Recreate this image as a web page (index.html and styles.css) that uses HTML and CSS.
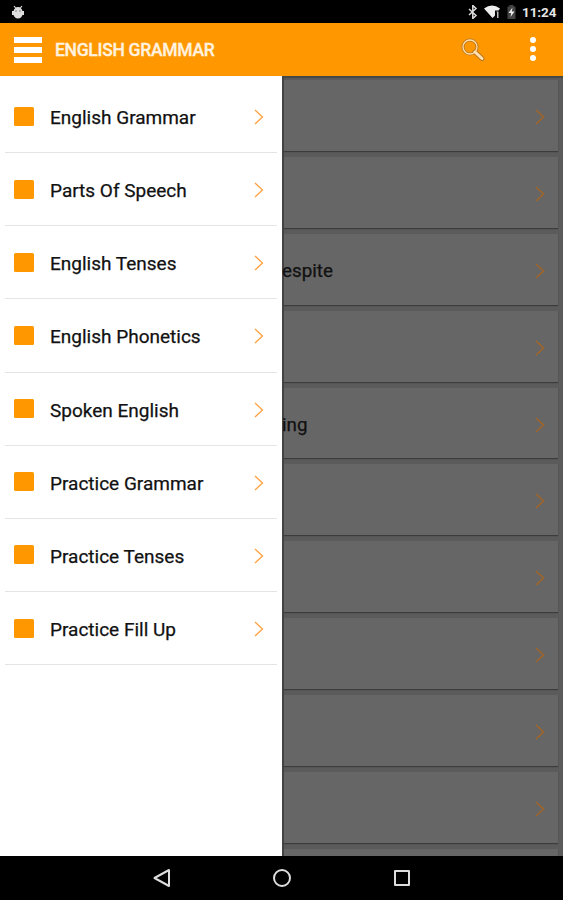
FILE: index.html
```
<!DOCTYPE html>
<html lang="en">
<head>
    <meta charset="UTF-8">
    <title>English Grammar</title>
    <link rel="stylesheet" href="styles.css">
</head>
<body>
<div class="status">
    <svg class="droid" width="14" height="14" viewBox="0 0 14 14">
        <path d="M3 1l1.600 2M11 1L9.400 3" stroke="#ddd" stroke-width="1.200"/>
        <path d="M2.500 7a4.500 5 0 0 1 9 0z M1 6h12v4H1z M2.500 9h9a4.500 4.500 0 0 1-9 0z" fill="#ddd"/>
        <circle cx="5" cy="6" r=".8" fill="#777"/><circle cx="9" cy="6" r=".8" fill="#777"/>
    </svg>
    <div class="tray">
        <svg width="10" height="14" viewBox="0 0 10 14"><path d="M1 4l7 6.500-3.200 3V.5L8 3.500 1 10" fill="none" stroke="#ddd" stroke-width="1.500"/></svg>
        <svg class="wifi" width="17" height="14" viewBox="0 0 17 14"><path d="M0 3.500Q8-2.500 16 3.500L14.500 5.500H11v5L8.500 13z" fill="#eee"/><path d="M12.500 6.500h2V13h-1.500V8z" fill="#bbb"/></svg>
        <svg class="battery" width="9" height="14" viewBox="0 0 9 14"><path d="M2.500 0h4v1.500H8.500V14H.5V1.500h2z" fill="#444"/><path d="M5.500 2.500L1.500 8h2.700L3.500 12 7.500 6.500H4.800z" fill="#eee"/></svg>
        <span class="time">11:24</span>
    </div>
</div>
<header class="bar">
    <div class="burger"><i></i><i></i><i></i></div>
    <h1>ENGLISH GRAMMAR</h1>
    <svg class="search" width="24" height="24" viewBox="0 0 24 24">
        <circle cx="9" cy="9" r="7" fill="none" stroke="#b87521" stroke-width="3"/>
        <path d="M14 14l7 6.500" stroke="#b87521" stroke-width="5" stroke-linecap="round"/>
        <circle cx="9" cy="9" r="7" fill="none" stroke="#ffdda6" stroke-width="1.300"/>
        <path d="M14 14l7 6.500" stroke="#ffe2b0" stroke-width="3" stroke-linecap="round"/>
    </svg>
    <div class="more"><i></i><i></i><i></i></div>
</header>
<main class="content">
    <nav class="drawer">
        <a class="item"><i></i><span>English Grammar</span><svg class="arrow" width="10" height="16" viewBox="0 0 10 16"><path d="M1 1l7.500 7L1 15"/></svg></a>
        <a class="item"><i></i><span>Parts Of Speech</span><svg class="arrow" width="10" height="16" viewBox="0 0 10 16"><path d="M1 1l7.500 7L1 15"/></svg></a>
        <a class="item"><i></i><span>English Tenses</span><svg class="arrow" width="10" height="16" viewBox="0 0 10 16"><path d="M1 1l7.500 7L1 15"/></svg></a>
        <a class="item"><i></i><span>English Phonetics</span><svg class="arrow" width="10" height="16" viewBox="0 0 10 16"><path d="M1 1l7.500 7L1 15"/></svg></a>
        <a class="item"><i></i><span>Spoken English</span><svg class="arrow" width="10" height="16" viewBox="0 0 10 16"><path d="M1 1l7.500 7L1 15"/></svg></a>
        <a class="item"><i></i><span>Practice Grammar</span><svg class="arrow" width="10" height="16" viewBox="0 0 10 16"><path d="M1 1l7.500 7L1 15"/></svg></a>
        <a class="item"><i></i><span>Practice Tenses</span><svg class="arrow" width="10" height="16" viewBox="0 0 10 16"><path d="M1 1l7.500 7L1 15"/></svg></a>
        <a class="item"><i></i><span>Practice Fill Up</span><svg class="arrow" width="10" height="16" viewBox="0 0 10 16"><path d="M1 1l7.500 7L1 15"/></svg></a>
    </nav>
    <div class="list">
        <div class="card"><span></span><svg class="arrow" width="10" height="16" viewBox="0 0 10 16"><path d="M1 1l7.500 7L1 15"/></svg></div>
        <div class="card"><span></span><svg class="arrow" width="10" height="16" viewBox="0 0 10 16"><path d="M1 1l7.500 7L1 15"/></svg></div>
        <div class="card"><span>espite</span><svg class="arrow" width="10" height="16" viewBox="0 0 10 16"><path d="M1 1l7.500 7L1 15"/></svg></div>
        <div class="card"><span></span><svg class="arrow" width="10" height="16" viewBox="0 0 10 16"><path d="M1 1l7.500 7L1 15"/></svg></div>
        <div class="card"><span>ing</span><svg class="arrow" width="10" height="16" viewBox="0 0 10 16"><path d="M1 1l7.500 7L1 15"/></svg></div>
        <div class="card"><span></span><svg class="arrow" width="10" height="16" viewBox="0 0 10 16"><path d="M1 1l7.500 7L1 15"/></svg></div>
        <div class="card"><span></span><svg class="arrow" width="10" height="16" viewBox="0 0 10 16"><path d="M1 1l7.500 7L1 15"/></svg></div>
        <div class="card"><span></span><svg class="arrow" width="10" height="16" viewBox="0 0 10 16"><path d="M1 1l7.500 7L1 15"/></svg></div>
        <div class="card"><span></span><svg class="arrow" width="10" height="16" viewBox="0 0 10 16"><path d="M1 1l7.500 7L1 15"/></svg></div>
        <div class="card"><span></span><svg class="arrow" width="10" height="16" viewBox="0 0 10 16"><path d="M1 1l7.500 7L1 15"/></svg></div>
        <div class="card"></div>
    </div>
</main>
<footer class="keys">
    <svg width="20" height="20" viewBox="0 0 20 20"><path d="M17 2v16L2.500 10z"/></svg>
    <svg width="20" height="20" viewBox="0 0 20 20"><circle cx="10" cy="10" r="8"/></svg>
    <svg width="20" height="20" viewBox="0 0 20 20"><rect x="3" y="3" width="14" height="14"/></svg>
</footer>
</body>
</html>
```
FILE: styles.css
```
* {
    box-sizing: border-box;
}
body {
    display: flex;
    flex-direction: column;
    width: 563px;
    height: 900px;
    margin: 0;
    overflow: hidden;
    background: #000;
    font-family: Roboto, sans-serif;
}
svg {
    display: block;
    flex: none;
}
.status {
    display: flex;
    align-items: center;
    justify-content: space-between;
    height: 23px;
    padding: 1px 7px 0 11px;
}
.tray {
    display: flex;
    align-items: center;
}
.wifi {
    margin-left: 6px;
}
.battery {
    margin: 0 6px 0 6px;
}
.time {
    width: 34px;
    color: #e6e6e6;
    font-size: 13.5px;
    font-weight: 700;
    letter-spacing: -0.1px;
    white-space: nowrap;
}
.bar {
    display: flex;
    align-items: center;
    height: 53px;
    padding: 0 23px 0 14px;
    background: #ff9800;
}
.burger {
    display: flex;
    flex-direction: column;
    gap: 3.5px;
    width: 28px;
    padding-top: 1px;
    margin-right: 13px;
}
.burger i {
    height: 6.3px;
    background: #fff;
}
.bar h1 {
    flex: 1;
    margin: 0;
    color: #fff3e0;
    font-size: 17.5px;
    font-weight: 500;
    letter-spacing: -0.3px;
    -webkit-text-stroke: 0.3px #fff3e0;
}
.search {
    margin-right: 41px;
}
.more {
    display: flex;
    flex-direction: column;
    gap: 3px;
    width: 14px;
    padding-bottom: 2px;
    align-items: center;
}
.more i {
    width: 6px;
    height: 6px;
    border-radius: 50%;
    background: #fff;
}
.content {
    display: flex;
    height: 780px;
    overflow: hidden;
}
.drawer {
    width: 282px;
    padding: 4px 5px 0;
    background: #fff;
}
.item {
    display: flex;
    align-items: center;
    height: 73.15px;
    padding: 0 13px 0 9px;
    border-bottom: 1px solid #e4e4e4;
}
.item i {
    width: 20px;
    height: 19px;
    margin-right: 16px;
    border-radius: 1.5px;
    background: #ff9800;
}
.item span,
.card span {
    flex: 1;
    padding-top: 3px;
    color: #111;
    font-size: 19px;
    -webkit-text-stroke: 0.25px #111;
    white-space: nowrap;
}
.arrow {
    margin-top: 2px;
}
.arrow path {
    fill: none;
    stroke: #ffa040;
    stroke-width: 1.3;
}
.list {
    flex: 1;
    padding: 4px 5px 0 0;
    border-left: 2px solid #444;
    background: #5b5b5b;
    box-shadow: inset 0 2px 1px #474747;
}
.card {
    display: flex;
    align-items: center;
    height: 70.9px;
    margin-bottom: 6px;
    padding-right: 13px;
    background: #666;
    box-shadow: 0 1px 1px #3c3c3c;
}
.card span {
    margin-left: -2px;
    font-size: 18.8px;
}
.card .arrow {
    margin-top: 3px;
}
.card .arrow path {
    stroke: #a0652b;
    stroke-width: 1.6;
}
.keys {
    display: flex;
    align-items: center;
    justify-content: center;
    gap: 100px;
    height: 44px;
    background: #000;
}
.keys path,
.keys circle,
.keys rect {
    fill: none;
    stroke: #ddd;
    stroke-width: 2;
    stroke-linejoin: round;
}
```
